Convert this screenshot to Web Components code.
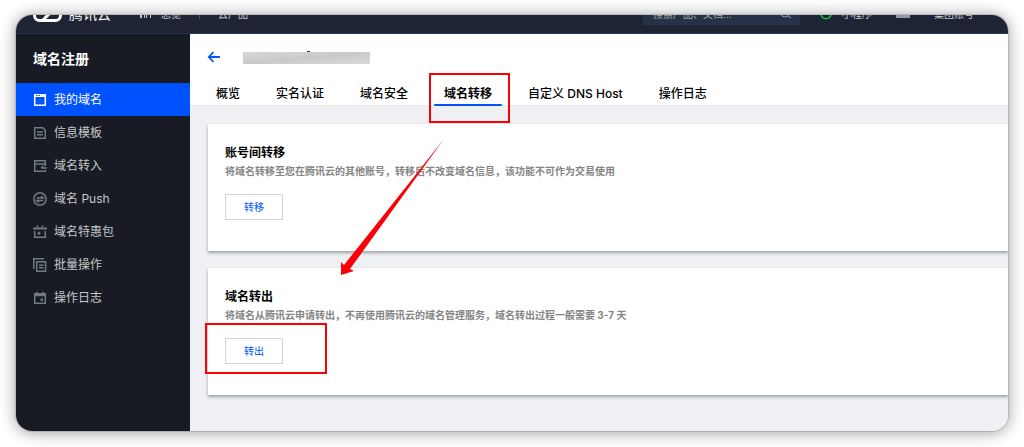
<!DOCTYPE html>
<html lang="zh-CN">
<head>
<meta charset="utf-8">
<meta name="viewport" content="width=device-width, initial-scale=1">
<title>域名注册</title>
<style>
  html, body { margin: 0; }
  body { font-family: Inter, "Noto Sans CJK SC", sans-serif; font-size: 12px; color: #000; background: #fff; }
</style>
</head>
<body>
<console-window>
  <console-header slot="header"></console-header>
  <side-menu slot="side" heading="域名注册">
    <side-item icon="window" active>我的域名</side-item>
    <side-item icon="template">信息模板</side-item>
    <side-item icon="transfer">域名转入</side-item>
    <side-item icon="push">域名 Push</side-item>
    <side-item icon="gift">域名特惠包</side-item>
    <side-item icon="batch">批量操作</side-item>
    <side-item icon="log">操作日志</side-item>
  </side-menu>
  <domain-head>
    <domain-tab>概览</domain-tab>
    <domain-tab>实名认证</domain-tab>
    <domain-tab>域名安全</domain-tab>
    <domain-tab active>域名转移</domain-tab>
    <domain-tab>自定义 DNS Host</domain-tab>
    <domain-tab>操作日志</domain-tab>
  </domain-head>
  <card-list>
    <action-card heading="账号间转移" action="转移">将域名转移至您在腾讯云的其他账号，转移后不改变域名信息，该功能不可作为交易使用</action-card>
    <action-card heading="域名转出" action="转出" marked>将域名从腾讯云申请转出，不再使用腾讯云的域名管理服务，域名转出过程一般需要 3-7 天</action-card>
  </card-list>
  <pointer-arrow slot="overlay"></pointer-arrow>
</console-window>

<script>
function define(name, html, setup) {
  const template = document.createElement('template');
  template.innerHTML = html;
  customElements.define(name, class extends HTMLElement {
    constructor() {
      super();
      this.attachShadow({ mode: 'open' }).append(template.content.cloneNode(true));
    }
    connectedCallback() { if (setup) setup(this, this.shadowRoot); }
  });
}

define('console-window', `
<style>
  :host { display: flex; box-sizing: border-box; min-height: 100vh; padding: 15px 16px 16px; overflow: hidden; }
  .frame { position: relative; flex: 1; min-width: 0; display: flex; flex-direction: column; border-radius: 16px;
    box-shadow: 0 0 0 1px rgba(0,0,0,.12), 0 1px 16px rgba(0,0,0,.42); }
  .clip { flex: 1; display: flex; flex-direction: column; overflow: hidden; border-radius: 16px; background: #eef0f4; }
  .body { flex: 1; display: flex; }
  main { flex: 1; min-width: 0; }
</style>
<div class="frame">
  <div class="clip">
    <slot name="header"></slot>
    <div class="body"><slot name="side"></slot><main><slot></slot></main></div>
  </div>
  <slot name="overlay"></slot>
</div>`);

define('console-header', `
<style>
  :host { display: flex; align-items: flex-end; height: 19px; overflow: hidden; background: #1e2433;
    box-shadow: inset 0 -1px #293445; color: #c3c7ce; font-size: 10px; }
  .row { flex: 1; height: 40px; display: flex; align-items: center; padding: 0 34px 0 17px; }
  .row > * { flex: none; }
  .brand { font-size: 14px; line-height: 20px; color: #fff; margin-left: 7px; }
  .grid { margin-left: 28px; }
  .overview { margin-left: 9px; }
  .rule { width: 1px; height: 10px; margin: 0 18px; background: #4a5262; }
  .space { flex: 1 1 0; }
  input { box-sizing: border-box; width: 157px; height: 22px; padding: 0 10px; border: 0; background: #263248;
    font: inherit; color: #c3c7ce; }
  input::placeholder { color: #a5aaad; opacity: 1; }
  .search { display: flex; align-items: center; }
  .search svg { margin-left: -20px; margin-right: 8px; }
  .mini { margin-left: 20px; }
  .miniText { margin-left: 10px; }
  .mail { margin-left: 24px; }
  .account { margin-left: 24px; }
  a { color: inherit; text-decoration: none; line-height: 16px; }
</style>
<div class="row">
  <svg width="29" height="20" viewBox="0 0 29 20" fill="none" stroke="#fff" stroke-width="3"><path d="M8 2h13a6 6 0 0 1 6.500 6v3.500a5 5 0 0 1-5 5H6.500a5 5 0 0 1-5-5V8A6 6 0 0 1 8 2M10 16L22 4"/></svg>
  <a class="brand" href="#">腾讯云</a>
  <svg class="grid" width="13" height="10" viewBox="0 0 13 10" fill="#c3c7ce"><path d="M0 0h5v4H0zM8 0h5v4H8zM1 4h2v5H1zM5 4h1v5H5zM7 4h1v5H7zM11 4h1v5h-1z"/></svg>
  <a class="overview" href="#">总览</a>
  <span class="rule"></span>
  <a href="#">云产品</a>
  <span class="space"></span>
  <div class="search">
    <input type="text" aria-label="搜索" placeholder="搜索产品、文档...">
    <svg width="12" height="12" viewBox="0 0 12 12" fill="none" stroke="#8f99a9"><circle cx="5" cy="5" r="4"/><path d="M8 8l3 2"/></svg>
  </div>
  <svg class="mini" width="12" height="12" viewBox="0 0 12 12" fill="none" stroke="#16bd45" stroke-width="1.500"><circle cx="6" cy="5.500" r="5.200"/></svg>
  <a class="miniText" href="#">小程序</a>
  <svg class="mail" width="14" height="8" viewBox="0 0 14 8" fill="#8f99a9"><path d="M0 0h14v8H0z"/></svg>
  <a class="account" href="#">集团账号</a>
</div>`);

define('side-menu', `
<style>
  :host { display: block; flex: none; width: 174px; background: #181b23; }
  h1 { margin: 0; height: 49px; padding-left: 17px; line-height: 49px; font-size: 14px; font-weight: 700; color: #fff; }
</style>
<nav><h1></h1><slot></slot></nav>`, (el, root) => {
  root.querySelector('h1').textContent = el.getAttribute('heading');
});

const icons = {
  window: '<path d="M1.700 1.700h10.600v10.600H1.700z"/><path d="M1 2.500h12" stroke-width="3"/><path d="M3 2.500h1.500M5.500 2.500H7" stroke="#0052ff" stroke-width="1"/>',
  template: '<path d="M1.700 1.700h8l2.600 2.600v8H1.700zM4 6h6M4 8.700h6"/>',
  transfer: '<path d="M12.300 7V1.700H1.700v10.600h10.600V11M1.700 5h10.600M14 9H8M10.500 7L8 9"/>',
  push: '<circle cx="7" cy="7" r="6.200"/><path d="M3.800 6h6.500L8 4M10.200 8.500H3.800L6 10.500"/>',
  gift: '<path d="M0 3.500h14" stroke-width="2"/><path d="M4 0.500l1 2M10 0.500L9 2.500M1.700 6v6.300h10.600V6"/><path d="M4.500 8.200h3M6 6.700v3"/>',
  batch: '<path d="M.8 11V.8H11M3.700 3.700h8.900v9.500H3.700zM6 7.200h4.500M6 9.700h4.500"/>',
  log: '<path d="M1.700 3h10.600v9.300H1.700z"/><path d="M1 3.700h12" stroke-width="3"/><path d="M3.800.8v2M10.200.8v2"/><path d="M7.500 8.700H10" stroke-width="2.500"/>'
};
define('side-item', `
<style>
  :host { display: block; color: #c5c7ca; --icon: #6f7b84; }
  :host([active]) { background: #0052ff; color: #fff; --icon: #fff; }
  a { display: flex; align-items: center; gap: 7px; height: 33px; padding-left: 17px; color: inherit; text-decoration: none; line-height: 18px; }
  svg { stroke: var(--icon); fill: none; stroke-width: 1.500; }
</style>
<a href="#"><svg width="14" height="14" viewBox="0 0 14 14"></svg><span><slot></slot></span></a>`, (el, root) => {
  root.querySelector('svg').innerHTML = icons[el.getAttribute('icon')];
});

define('domain-head', `
<style>
  :host { display: block; background: #fff; border-bottom: 1px solid #e8eaee; }
  .title { display: flex; align-items: center; gap: 22px; height: 46px; padding-left: 17px; }
  button { display: flex; padding: 0; border: 0; background: none; }
  svg { display: block; }
  .tabs { display: flex; gap: 16px; padding-left: 16px; }
</style>
<div class="title">
  <button type="button" aria-label="返回"><svg width="14" height="12" viewBox="0 0 14 12" fill="none" stroke="#0052ff" stroke-width="1.800"><path d="M6.500 1L1.800 6l4.700 5M2 6h11"/></svg></button>
  <svg width="127" height="16" viewBox="0 0 127 16">
    <defs><linearGradient id="g" x1="0" y1="0" x2="1" y2="1"><stop offset="0" stop-color="#d8d8d9"/><stop offset=".5" stop-color="#c9c9ca"/><stop offset="1" stop-color="#dadadb"/></linearGradient></defs>
    <path d="M64 2h3v1h-3z" fill="#333"/><path d="M0 3h127v12H0z" fill="url(#g)"/>
  </svg>
</div>
<nav class="tabs"><slot></slot></nav>`);

define('domain-tab', `
<style>
  :host { display: block; position: relative; font-weight: 500; }
  :host([active]) { font-weight: 700; }
  a { display: block; padding: 0 10px; height: 25px; line-height: 28px; color: #000; text-decoration: none; white-space: nowrap; }
  .line, .mark { display: none; }
  :host([active]) .line { display: block; position: absolute; left: 0; right: 0; bottom: -1px; height: 2px; border-radius: 1px; background: #0052ff; }
  :host([active]) .mark { display: block; position: absolute; z-index: 1; inset: -7px -8px -18px -5px; border: 2px solid #fb0007; }
</style>
<a href="#"><slot></slot></a><span class="line"></span><span class="mark"></span>`);

define('card-list', `
<style>
  :host { display: flex; flex-direction: column; gap: 17px; padding: 18px 0 32px 18px; }
</style>
<slot></slot>`);

define('action-card', `
<style>
  :host { display: block; padding: 19px 17px 31px; background: #fff; box-shadow: 0 2px 3px rgba(40,45,55,.4); }
  h2 { margin: 0; font-size: 12px; line-height: 20px; font-weight: 700; }
  p { margin: 0 0 15px; font-size: 10px; line-height: 16px; color: #858585; font-weight: 700; }
  .action { position: relative; width: 58px; }
  button { display: block; box-sizing: border-box; width: 58px; height: 26px; padding: 0; border: 1px solid #cfd5de; background: #fff;
    font: inherit; font-size: 10px; line-height: 22px; color: #0052ff; }
  .mark { display: none; }
  :host([marked]) .mark { display: block; position: absolute; inset: -15px -44px -10px -20px; border: 2px solid #fb0007; }
</style>
<section>
  <h2></h2>
  <p><slot></slot></p>
  <div class="action"><button type="button"></button><span class="mark"></span></div>
</section>`, (el, root) => {
  root.querySelector('h2').textContent = el.getAttribute('heading');
  root.querySelector('button').textContent = el.getAttribute('action');
});

define('pointer-arrow', `
<style>
  :host { display: block; position: absolute; left: 325px; top: 124px; pointer-events: none; }
  svg { display: block; }
</style>
<svg width="104" height="137" viewBox="0 0 104 137" fill="#fb0007"><path d="M103 0L3 126l-3-3v13l13-4-4-2z"/></svg>`);
</script>
</body>
</html>
